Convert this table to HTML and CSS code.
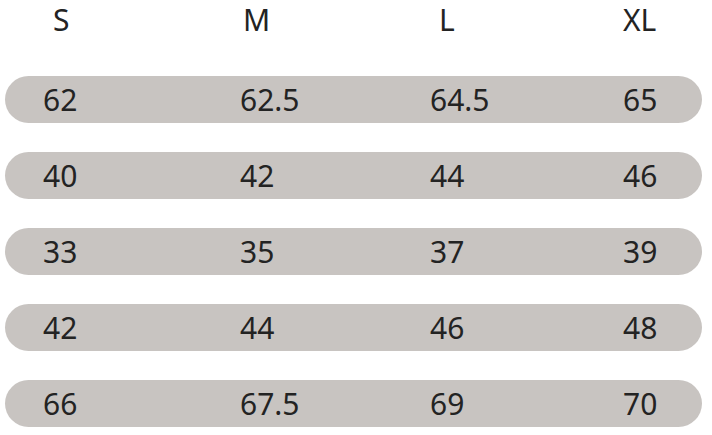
FILE: index.html
```html
<!doctype html>
<html lang="en">
<head>
    <meta charset="UTF-8">
    <title>Size chart</title>
    <link rel="stylesheet" href="styles.css">
</head>
<body>
    <div class="size-table">
        <!-- 尺码表头 -->
        <div class="size-head">
            <div class="size-head-cell">S</div>
            <div class="size-head-cell">M</div>
            <div class="size-head-cell">L</div>
            <div class="size-head-cell">XL</div>
        </div>

        <!-- 数据行 -->
        <div class="size-rows">
            <div class="size-row">
                <div>62</div><div>62.5</div><div>64.5</div><div>65</div>
            </div>
            <div class="size-row">
                <div>40</div><div>42</div><div>44</div><div>46</div>
            </div>
            <div class="size-row">
                <div>33</div><div>35</div><div>37</div><div>39</div>
            </div>
            <div class="size-row">
                <div>42</div><div>44</div><div>46</div><div>48</div>
            </div>
            <div class="size-row">
                <div>66</div><div>67.5</div><div>69</div><div>70</div>
            </div>
        </div>
    </div>
</body>
</html>
```

FILE: styles.css
```css
html,
body {
    margin: 0;
    padding: 0;
    background-color: #fff;
}

body {
    font-family: "Noto Sans", "Open Sans", sans-serif;
    font-size: 30px;
    color: #232323;
}

.size-table {
    width: 697px;
    padding-left: 5px;
}

.size-head {
    display: grid;
    grid-template-columns: 190px 196px 184px 1fr;
    padding-left: 48px;
    height: 40px;
    line-height: 40px;
    margin-bottom: 36px;
}

.size-rows {
    display: flex;
    flex-direction: column;
    gap: 29px;
}

.size-row {
    display: grid;
    grid-template-columns: 197px 190px 193px 1fr;
    padding-left: 38px;
    height: 47px;
    line-height: 47px;
    background-color: #c8c4c1;
    border-radius: 24px;
}
```
